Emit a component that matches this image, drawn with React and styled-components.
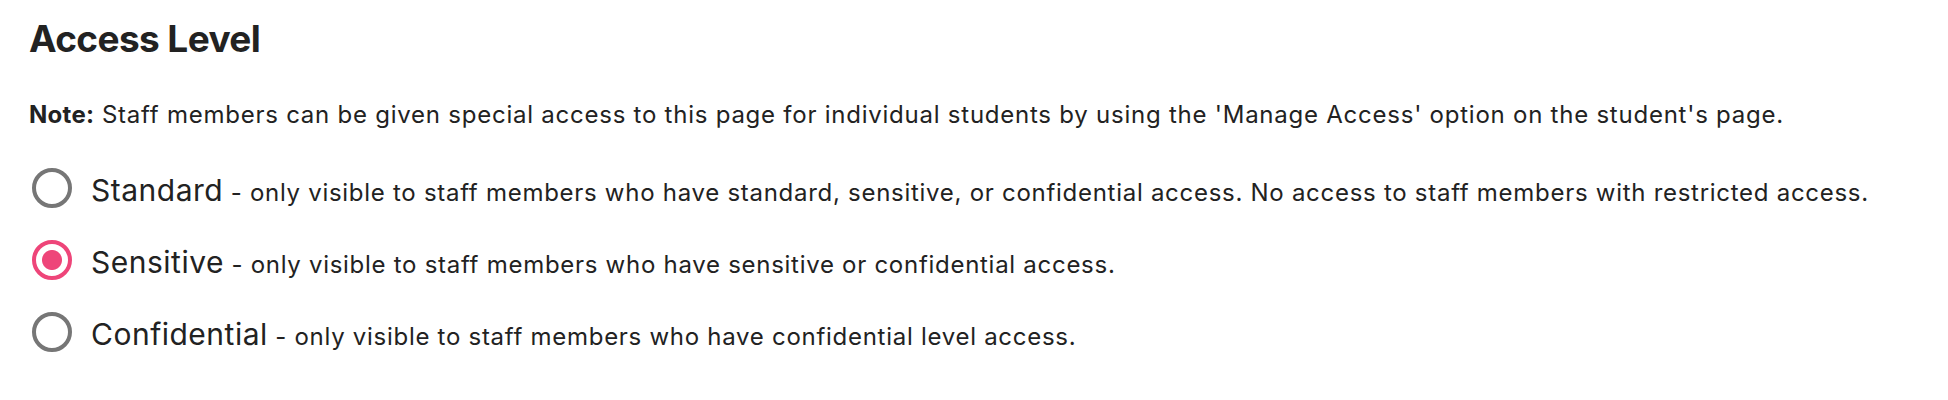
import React, { useState } from 'react';
import styled, { createGlobalStyle } from 'styled-components';

const GlobalStyle = createGlobalStyle`
  body {
    margin: 0;
    background: #fff;
    font-family: Inter, 'Noto Sans', sans-serif;
    color: #222;
  }
`;

const levels = [
  {
    id: 'standard',
    label: 'Standard',
    text: 'only visible to staff members who have standard, sensitive, or confidential access. No access to staff members with restricted access.',
  },
  {
    id: 'sensitive',
    label: 'Sensitive',
    text: 'only visible to staff members who have sensitive or confidential access.',
  },
  {
    id: 'confidential',
    label: 'Confidential',
    text: 'only visible to staff members who have confidential level access.',
  },
];

export default function App() {
  const [level, setLevel] = useState('sensitive');

  return (
    <>
      <GlobalStyle />
      <Section>
        <Title>Access Level</Title>
        <Note>
          <strong>Note:</strong> Staff members can be given special access to this page for individual students by
          using the 'Manage Access' option on the student's page.
        </Note>
        <Options>
          {levels.map((item) => (
            <Option key={item.id}>
              <Radio
                type="radio"
                name="access-level"
                checked={level === item.id}
                onChange={() => setLevel(item.id)}
              />
              <OptionText>
                <Label>{item.label}</Label>
                <Description> - {item.text}</Description>
              </OptionText>
            </Option>
          ))}
        </Options>
      </Section>
    </>
  );
}

const Section = styled.div`
  padding: 16px 29px 0;
`;

const Title = styled.h2`
  margin: 0;
  font-size: 37px;
  line-height: 46px;
  font-weight: 700;
  letter-spacing: -0.6px;
  color: #222;
`;

const Note = styled.p`
  margin: 38px 0 0;
  font-size: 24px;
  line-height: 30px;
  letter-spacing: 0.76px;

  strong {
    font-weight: 700;
    letter-spacing: 0.3px;
  }
`;

const Options = styled.div`
  display: flex;
  flex-direction: column;
  margin-top: 22px;
`;

const Option = styled.label`
  display: flex;
  align-items: center;
  height: 72px;
  cursor: pointer;
`;

const Radio = styled.input`
  appearance: none;
  flex: none;
  width: 40px;
  height: 40px;
  margin: 0 19px 0 3px;
  border: 4px solid #767676;
  border-radius: 50%;
  background: #fff;
  cursor: pointer;

  &:checked {
    border-color: #ee4579;
    background: radial-gradient(circle, #ee4579 0, #ee4579 9.5px, #fff 10.5px);
  }
`;

const OptionText = styled.span`
  padding-top: 4px;
  white-space: nowrap;
`;

const Label = styled.span`
  font-size: 30px;
  line-height: 40px;
  letter-spacing: 0.5px;
`;

const Description = styled.span`
  font-size: 24px;
  letter-spacing: 0.72px;
`;
